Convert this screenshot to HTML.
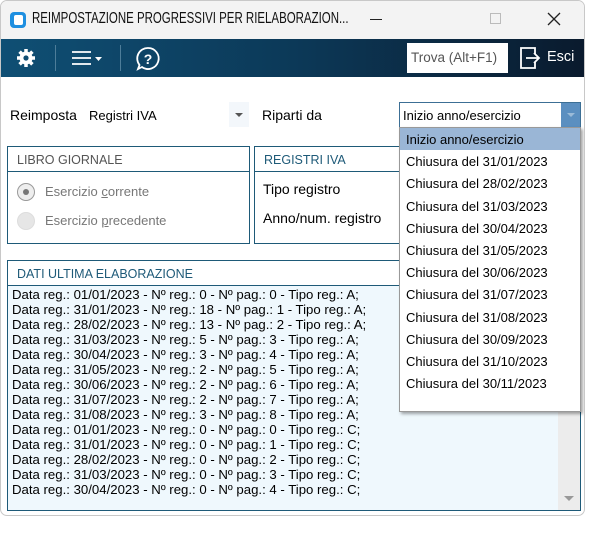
<!DOCTYPE html>
<html><head><meta charset="utf-8"><style>
*{margin:0;padding:0;box-sizing:border-box}
body{width:610px;height:546px;background:#fff;font-family:"Liberation Sans",sans-serif;position:relative;overflow:hidden;color:#000}
.abs{position:absolute}
#win{left:0;top:0;width:585px;height:516px;border:1px solid #c8c8c8;border-radius:7px;background:#fff;overflow:hidden}
#title{left:0;top:0;width:585px;height:38px;background:#f3f3f3}
#tb{left:0;top:38px;width:585px;height:38px;background:linear-gradient(90deg,#0f4f74,#0c3958 50%,#0a1a2d)}
.box{border:1px solid #1e5a78;background:#fff}
.hdr{height:25px;border-bottom:1px solid #1e5a78;color:#1e5a78;font-size:12.5px;padding:6px 0 0 9px}
.lst{font-size:13.2px;line-height:15px;white-space:pre;color:#000}
.dd div{height:22.2px;font-size:13px;padding:4px 0 0 6px}
</style></head><body>
<div id="win" class="abs">
<div id="title" class="abs">
 <div class="abs" style="left:9px;top:11px;width:16px;height:16px;border-radius:4px;background:#1e8fe0"></div>
 <div class="abs" style="left:13px;top:14px;width:9px;height:10px;border-radius:2px;background:#fff"></div>
 <div class="abs" style="left:31px;top:9px;font-size:15.5px;color:#111;white-space:nowrap;transform:scaleX(0.74);transform-origin:0 0">REIMPOSTAZIONE PROGRESSIVI PER RIELABORAZION...</div>
 <div class="abs" style="left:369px;top:18px;width:12px;height:1px;background:#222"></div>
 <div class="abs" style="left:489px;top:12px;width:11px;height:11px;border:1px solid #bbb"></div>
 <svg class="abs" style="left:546px;top:11px" width="14" height="14"><path d="M1 1L13 13M13 1L1 13" stroke="#222" stroke-width="1.3"/></svg>
</div>
<div id="tb" class="abs">
 <svg class="abs" style="left:15px;top:9px" width="20" height="20" viewBox="0 0 20 20"><g fill="#fff"><circle cx="10" cy="10" r="6.5"/><g stroke="#fff" stroke-width="3.5"><path d="M10 1v18M1 10h18M3.6 3.6l12.8 12.8M16.4 3.6L3.6 16.4"/></g></g><circle cx="10" cy="10" r="2.6" fill="#0f4d72"/></svg>
 <div class="abs" style="left:54px;top:6px;width:1px;height:26px;background:#4d7d99"></div>
 <svg class="abs" style="left:70px;top:11px" width="34" height="16"><path d="M1 2h19M1 8h19M1 14h19" stroke="#fff" stroke-width="1.7"/><path d="M24 7h7l-3.5 4z" fill="#fff"/></svg>
 <div class="abs" style="left:119px;top:6px;width:1px;height:26px;background:#4d7d99"></div>
 <svg class="abs" style="left:134px;top:7px" width="26" height="26"><path d="M13 2a10.5 10.5 0 1 1-6 19l-4 2 1.5-4A10.5 10.5 0 0 1 13 2z" fill="none" stroke="#fff" stroke-width="1.8"/><text x="13" y="18" font-size="14" font-weight="bold" fill="#fff" text-anchor="middle" font-family="Liberation Sans">?</text></svg>
 <div class="abs" style="left:406px;top:4px;width:101px;height:30px;background:#fff;font-size:13.5px;color:#555;padding:7px 0 0 4px">Trova (Alt+F1)</div>
 <svg class="abs" style="left:518px;top:7px" width="24" height="24"><path d="M9 2H2v20h14v-6M16 8V2H9" fill="none" stroke="#fff" stroke-width="1.8"/><path d="M7 12h13M15 7l5 5-5 5" fill="none" stroke="#fff" stroke-width="1.8"/></svg>
 <div class="abs" style="left:546px;top:10px;font-size:14.5px;color:#fff">Esci</div>
</div>
<div class="abs" style="left:9px;top:106px;font-size:14px">Reimposta</div>
<div class="abs" style="left:88px;top:107px;font-size:13px">Registri IVA</div>
<div class="abs" style="left:228px;top:101px;width:20px;height:25px;background:#f3f7fb"></div>
<div class="abs" style="left:234px;top:112px;width:0;height:0;border:4px solid transparent;border-top:4px solid #555;border-bottom:0"></div>
<div class="abs" style="left:261px;top:106px;font-size:14px">Riparti da</div>
<div class="abs box" style="left:398px;top:101px;width:182px;height:26px;border-color:#3c6f95;font-size:13px;padding:5px 0 0 3px">Inizio anno/esercizio</div>
<div class="abs" style="left:560px;top:102px;width:19px;height:24px;background:#5b8fc0"></div>
<div class="abs" style="left:566px;top:112px;border:4px solid transparent;border-top:4px solid #9bbbd8;border-bottom:0"></div>

<div class="abs box" style="left:6px;top:145px;width:243px;height:98px">
 <div class="hdr" style="color:#555">LIBRO GIORNALE</div>
 <div class="abs" style="left:9px;top:36px;width:18px;height:18px;border-radius:50%;border:1.5px solid #999;background:#eee"></div>
 <div class="abs" style="left:15px;top:42px;width:6px;height:6px;border-radius:50%;background:#777"></div>
 <div class="abs" style="left:37px;top:37px;font-size:13px;color:#777">Esercizio <u>c</u>orrente</div>
 <div class="abs" style="left:9px;top:65px;width:18px;height:18px;border-radius:50%;border:1px solid #ddd;background:#e6e6e6"></div>
 <div class="abs" style="left:37px;top:66px;font-size:13px;color:#777">Esercizio <u>p</u>recedente</div>
</div>
<div class="abs box" style="left:253px;top:145px;width:160px;height:98px">
 <div class="hdr">REGISTRI IVA</div>
 <div class="abs" style="left:8px;top:34px;font-size:14px">Tipo registro</div>
 <div class="abs" style="left:8px;top:63px;font-size:14px">Anno/num. registro</div>
</div>
<div class="abs box" style="left:6px;top:259px;width:574px;height:251px">
 <div class="hdr">DATI ULTIMA ELABORAZIONE</div>
 <div class="abs" style="left:0;top:25px;width:572px;height:224px;background:#eff8fd"></div>
 <div class="abs" style="left:550px;top:25px;width:22px;height:224px;background:#ececec"></div>
 <div class="abs" style="left:556px;top:235px;border:5px solid transparent;border-top:5px solid #999;border-bottom:0"></div>
 <div class="abs lst" style="left:4px;top:26px">Data reg.: 01/01/2023 - Nº reg.: 0 - Nº pag.: 0 - Tipo reg.: A;
Data reg.: 31/01/2023 - Nº reg.: 18 - Nº pag.: 1 - Tipo reg.: A;
Data reg.: 28/02/2023 - Nº reg.: 13 - Nº pag.: 2 - Tipo reg.: A;
Data reg.: 31/03/2023 - Nº reg.: 5 - Nº pag.: 3 - Tipo reg.: A;
Data reg.: 30/04/2023 - Nº reg.: 3 - Nº pag.: 4 - Tipo reg.: A;
Data reg.: 31/05/2023 - Nº reg.: 2 - Nº pag.: 5 - Tipo reg.: A;
Data reg.: 30/06/2023 - Nº reg.: 2 - Nº pag.: 6 - Tipo reg.: A;
Data reg.: 31/07/2023 - Nº reg.: 2 - Nº pag.: 7 - Tipo reg.: A;
Data reg.: 31/08/2023 - Nº reg.: 3 - Nº pag.: 8 - Tipo reg.: A;
Data reg.: 01/01/2023 - Nº reg.: 0 - Nº pag.: 0 - Tipo reg.: C;
Data reg.: 31/01/2023 - Nº reg.: 0 - Nº pag.: 1 - Tipo reg.: C;
Data reg.: 28/02/2023 - Nº reg.: 0 - Nº pag.: 2 - Tipo reg.: C;
Data reg.: 31/03/2023 - Nº reg.: 0 - Nº pag.: 3 - Tipo reg.: C;
Data reg.: 30/04/2023 - Nº reg.: 0 - Nº pag.: 4 - Tipo reg.: C;</div>
</div>
<div class="abs dd" style="left:398px;top:126px;width:182px;height:285px;background:#fff;border:1px solid #999;box-shadow:2px 2px 3px rgba(0,0,0,.35)">
 <div style="background:#9ab6d6">Inizio anno/esercizio</div>
 <div>Chiusura del 31/01/2023</div><div>Chiusura del 28/02/2023</div><div>Chiusura del 31/03/2023</div>
 <div>Chiusura del 30/04/2023</div><div>Chiusura del 31/05/2023</div><div>Chiusura del 30/06/2023</div>
 <div>Chiusura del 31/07/2023</div><div>Chiusura del 31/08/2023</div><div>Chiusura del 30/09/2023</div>
 <div>Chiusura del 31/10/2023</div><div>Chiusura del 30/11/2023</div>
</div>
</div>
</body></html>
